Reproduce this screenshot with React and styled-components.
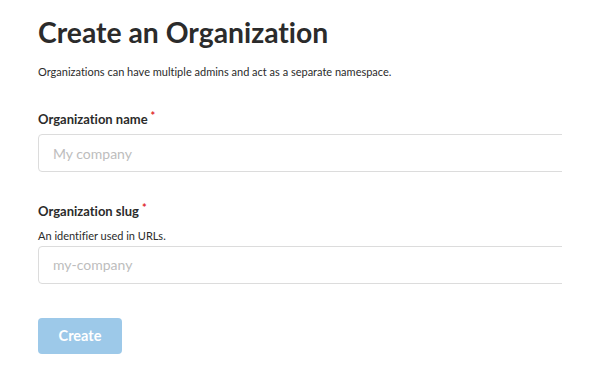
import React from "react";
import styled, { createGlobalStyle } from "styled-components";

const Global = createGlobalStyle`
  html, body { margin: 0; padding: 0; background: #fff; }
  body {
    font-family: Lato, "Open Sans", sans-serif;
    color: #2b2b2b;
    font-variant-ligatures: no-common-ligatures;
  }
  * { box-sizing: border-box; }
`;

const Page = styled.div`
  width: 562px;
  overflow: hidden;
  padding: 12px 0 0 38px;
`;

const Title = styled.h1`
  margin: 0;
  font-size: 28.3px;
  font-weight: 700;
  line-height: 40px;
  color: #2b2b2b;
`;

const Lead = styled.p`
  margin: 12px 0 0;
  font-size: 11px;
  line-height: 16px;
  color: #2b2b2b;
`;

const Form = styled.form`
  display: flex;
  flex-direction: column;
  margin-top: 26px;
`;

const Field = styled.div`
  display: flex;
  flex-direction: column;
  margin-bottom: 26px;
`;

const Label = styled.label`
  font-size: 13px;
  font-weight: 700;
  line-height: 18px;
  color: #2b2b2b;
  margin-bottom: ${(p) => (p.$hasHelp ? 7 : 6)}px;
`;

const Req = styled.sup`
  color: #e0262b;
  font-size: 11px;
  margin-left: 3px;
  position: relative;
  top: 1px;
`;

const Help = styled.div`
  font-size: 11px;
  line-height: 15px;
  margin-bottom: 3px;
  color: #2b2b2b;
`;

const Input = styled.input`
  width: 560px;
  height: 38px;
  border: 1px solid #dcdcdc;
  border-radius: 4px;
  padding: 0 14px;
  font-family: Lato, sans-serif;
  font-size: 14px;
  color: #333;
  outline: none;
  &::placeholder { color: #bdbdbd; }
`;

const Button = styled.button`
  align-self: flex-start;
  width: 84px;
  height: 36px;
  border: none;
  border-radius: 4px;
  background: #9dc9e9;
  color: #fff;
  font-family: Lato, sans-serif;
  font-weight: 700;
  font-size: 14.5px;
  margin-top: 8px;
`;

export default function App() {
  return (
    <>
      <Global />
      <Page>
        <Title>Create an Organization</Title>
        <Lead>Organizations can have multiple admins and act as a separate namespace.</Lead>
        <Form onSubmit={(e) => e.preventDefault()}>
          <Field>
            <Label>Organization name<Req>*</Req></Label>
            <Input placeholder="My company" />
          </Field>
          <Field>
            <Label $hasHelp>Organization slug<Req>*</Req></Label>
            <Help>An identifier used in URLs.</Help>
            <Input placeholder="my-company" />
          </Field>
          <Button type="submit" disabled>Create</Button>
        </Form>
      </Page>
    </>
  );
}
